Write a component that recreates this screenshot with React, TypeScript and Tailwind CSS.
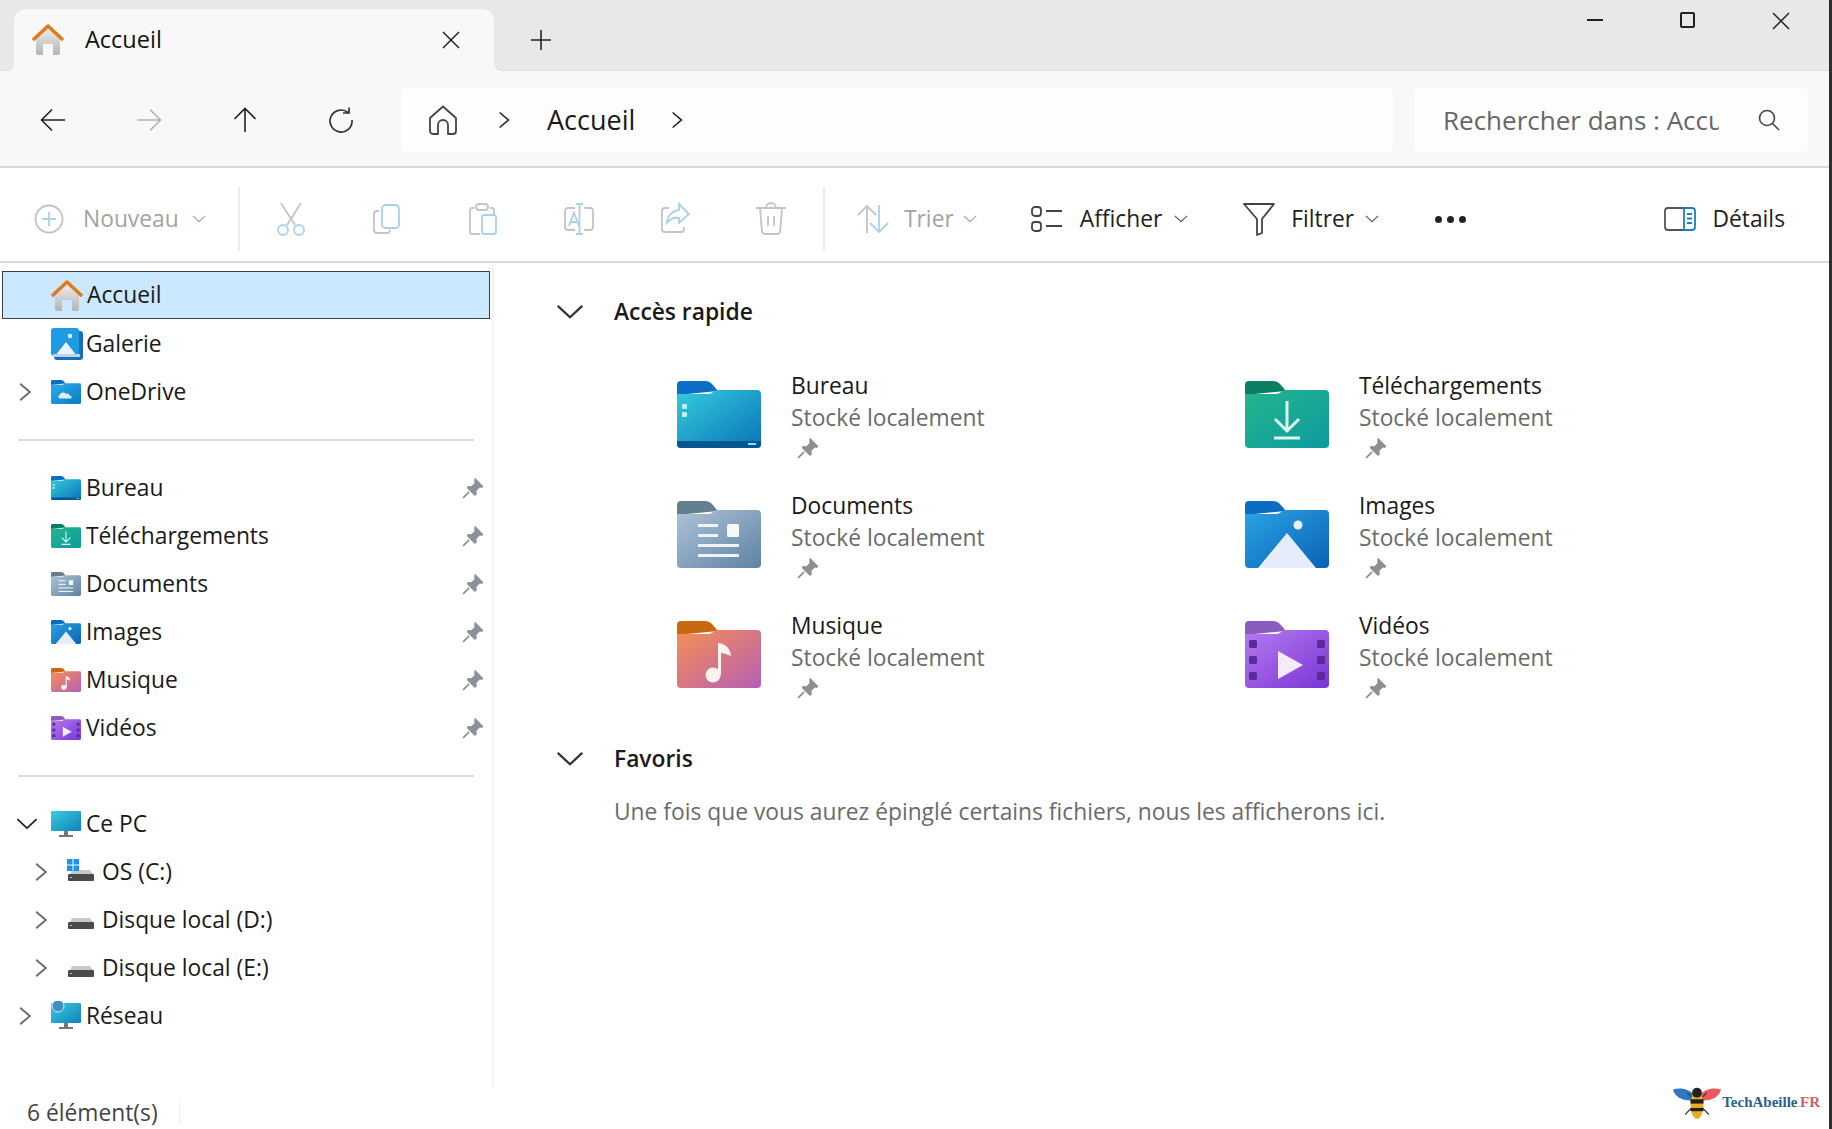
import type { ReactNode } from 'react';

const font = "font-['Open_Sans','Noto_Sans',sans-serif]";

type FolderKind = 'bureau' | 'dl' | 'docs' | 'images' | 'music' | 'videos' | 'cloud';

const palette: Record<FolderKind, { tab: string; from: string; to: string }> = {
  bureau: { tab: '#0a6fc4', from: '#35cbdc', to: '#0a73b8' },
  dl: { tab: '#0b7f62', from: '#23b58c', to: '#0f9aa0' },
  docs: { tab: '#64808f', from: '#aec3d8', to: '#5f82a4' },
  images: { tab: '#0c6cc4', from: '#2aa3e6', to: '#0a62b4' },
  music: { tab: '#c9680f', from: '#f78f54', to: '#b65fb4' },
  videos: { tab: '#8a5cc0', from: '#b57bf0', to: '#7a35d4' },
  cloud: { tab: '#0a6fc4', from: '#2eb0e8', to: '#0a78c8' },
};

// windows 11 style coloured folder, 84x67 viewbox
const Folder = ({ kind, small = false }: { kind: FolderKind; small?: boolean }) => {
  const p = palette[kind];
  const id = small ? `f-${kind}-s` : `f-${kind}`;
  return (
    <svg viewBox="0 0 84 67" className={small ? 'w-[30px] h-6' : 'w-[84px] h-[67px]'}>
      <defs>
        <linearGradient id={id} x1="0" y1="0" x2="1" y2="1">
          <stop offset="0" stopColor={p.from} />
          <stop offset="1" stopColor={p.to} />
        </linearGradient>
      </defs>
      <path d="M0 4a4 4 0 0 1 4-4h24c3 0 5 1 7 3l6 7-41 4z" fill={p.tab} />
      <path d="M0 13h31c2 0 4-1 5-2l3-2h41a4 4 0 0 1 4 4v50a4 4 0 0 1-4 4H4a4 4 0 0 1-4-4z" fill={`url(#${id})`} />
      {kind === 'bureau' && (
        <>
          <path d="M0 60h84v3a4 4 0 0 1-4 4H4a4 4 0 0 1-4-4z" fill="#04578f" />
          <rect x="5" y="23" width="5" height="5" rx="1" fill="#bff0f6" />
          <rect x="5" y="31" width="5" height="5" rx="1" fill="#bff0f6" />
          <rect x="71" y="62" width="8" height="2" fill="#9fd4ec" />
        </>
      )}
      {kind === 'dl' && (
        <path d="M42 20v30M30 38l12 12 12-12M29 57h26" stroke="#d8f8ee" strokeWidth="3" fill="none" />
      )}
      {kind === 'docs' && (
        <>
          <rect x="21" y="23" width="20" height="3" fill="#eef3f8" />
          <rect x="21" y="33" width="20" height="3" fill="#eef3f8" />
          <rect x="21" y="43" width="41" height="3" fill="#eef3f8" />
          <rect x="21" y="53" width="41" height="3" fill="#eef3f8" />
          <rect x="50" y="23" width="12" height="13" rx="1.5" fill="#f6f9fc" />
        </>
      )}
      {kind === 'images' && (
        <>
          <path d="M13 67l29-35 29 35z" fill="#e6edfa" />
          <circle cx="53" cy="24" r="4.5" fill="#e6f2fb" />
        </>
      )}
      {kind === 'music' && (
        <>
          <circle cx="36" cy="54" r="7.5" fill="#fdf3ee" />
          <path d="M41 54V22c3 0 12 2 13 13-4-2-8-3-10-3v22z" fill="#fdf3ee" />
        </>
      )}
      {kind === 'videos' && (
        <>
          <path d="M33 30l25 14-25 14z" fill="#f4ecfd" />
          {[16, 32, 48].map(y => (
            <g key={y} fill="#5a2a9c">
              <rect x="4" y={y + 3} width="8" height="8" rx="1.5" />
              <rect x="72" y={y + 3} width="8" height="8" rx="1.5" />
            </g>
          ))}
        </>
      )}
      {kind === 'cloud' && (
        <path d="M26 52c-6 0-8-9-1-10 1-8 13-9 16-3 5-3 11 0 11 4 7 0 8 9 1 9z" fill="#d8f0fb" />
      )}
    </svg>
  );
};

const Pin = ({ className = '', color = '#8a9199' }: { className?: string; color?: string }) => (
  <svg viewBox="0 0 20 20" className={className}>
    <path d="M11.5 0.5l8 8-1.500 1.500-1.800-.4-3 3 .2 3.200-1.600 1.500-7.600-7.600L5.500 8.200l3 .2 3-3-.4-1.800z" fill={color} />
    <path d="M6.5 13.5L1 19" stroke={color} strokeWidth="1.5" />
  </svg>
);

const Chevron = ({ dir = 'right', className = '' }: { dir?: 'right' | 'down'; className?: string }) => (
  <svg viewBox="0 0 16 16" className={className} fill="none" stroke="currentColor" strokeWidth="1.3">
    <path d={dir === 'right' ? 'M4.5 2L11.5 8l-7 6' : 'M1 4.5L8 11l7-6.5'} />
  </svg>
);

const HomeColor = ({ className = '' }: { className?: string }) => (
  <svg viewBox="0 0 32 32" className={className}>
    <defs>
      <linearGradient id="home-wall" x1="0" y1="0" x2="0" y2="1">
        <stop offset="0" stopColor="#efefef" />
        <stop offset="1" stopColor="#b4b4b4" />
      </linearGradient>
    </defs>
    <path d="M4 14L16 3l12 11v15a2 2 0 0 1-2 2h-5V20h-10v11H6a2 2 0 0 1-2-2z" fill="url(#home-wall)" />
    <path d="M1 16L16 2l15 14" fill="none" stroke="#e07a1c" strokeWidth="3.5" strokeLinejoin="round" />
  </svg>
);

const GalleryIcon = () => (
  <svg viewBox="0 0 32 32" className="w-8 h-8">
    <rect x="3" y="3" width="29" height="29" rx="3" fill="#1a6fb4" />
    <rect x="0" y="0" width="28" height="28" rx="3" fill="#1d9be6" />
    <path d="M4 28l11-14 11 14z" fill="#eef3fb" />
    <circle cx="19" cy="8" r="2.2" fill="#eef6fb" />
    <rect x="2" y="26" width="27" height="3" fill="#bcd4ec" />
  </svg>
);

const Monitor = ({ globe = false }: { globe?: boolean }) => (
  <svg viewBox="0 0 30 30" className="w-[30px] h-[30px]">
    <defs>
      <linearGradient id={globe ? 'mon-g' : 'mon-p'} x1="0" y1="0" x2="1" y2="1">
        <stop offset="0" stopColor="#3ecbe0" />
        <stop offset="1" stopColor="#0c82b8" />
      </linearGradient>
    </defs>
    <rect x="0" y="2" width="30" height="20" rx="1" fill={`url(#${globe ? 'mon-g' : 'mon-p'})`} />
    <rect x="13" y="22" width="4" height="4" fill="#6a7680" />
    <rect x="8" y="26" width="14" height="2" fill="#6a7680" />
    {globe && <circle cx="7" cy="5" r="6" fill="#3f8ec8" stroke="#dbe8f2" strokeWidth="1" />}
  </svg>
);

const Drive = ({ windows = false }: { windows?: boolean }) => (
  <svg viewBox="0 0 28 28" className="w-7 h-7">
    <path d="M3 16l2-4h18l3 4z" fill="#c9c9c9" />
    <rect x="1" y="16" width="26" height="7" rx="1" fill="#4a4a4a" />
    <rect x="3" y="19" width="2" height="1" fill="#bdbdbd" />
    {windows && (
      <g fill="#1b93e6">
        <rect x="0" y="1" width="5.5" height="5.5" />
        <rect x="6.5" y="1" width="5.5" height="5.5" />
        <rect x="0" y="7.5" width="5.5" height="5.5" />
        <rect x="6.5" y="7.5" width="5.5" height="5.5" />
      </g>
    )}
  </svg>
);

const Row = ({ icon, label, indent = 0, arrow, pinned = false }: { icon: ReactNode; label: string; indent?: 0 | 1; arrow?: 'right' | 'down'; pinned?: boolean }) => (
  <div className={`flex items-center h-12 pr-2 ${indent ? 'pl-[35px]' : 'pl-[19px]'}`}>
    <div className="w-[32px] shrink-0 text-[#666]">
      {arrow && <Chevron dir={arrow} className={`w-[22px] h-[22px] ${arrow === 'down' ? '-ml-[3px] text-[#222]' : '-ml-[5px]'}`} />}
    </div>
    <div className="w-[35px] h-8 shrink-0 flex items-center">{icon}</div>
    <span className="text-[#1a1a1a]">{label}</span>
    {pinned && <Pin className="w-[22px] h-[22px] ml-auto" />}
  </div>
);

const Divider = () => <div className="mx-[18px] my-[23px] h-0.5 bg-[#dcdcdc]" />;

const NavButton = ({ children }: { children: ReactNode }) => (
  <div className="w-[96px] flex items-center justify-center shrink-0">{children}</div>
);

// greyed out toolbar glyph, the accent part is blue
const Tool = ({ children }: { children: ReactNode }) => (
  <svg viewBox="0 0 32 36" className="w-8 h-9 mx-8 shrink-0" fill="none" strokeWidth="1.8">{children}</svg>
);

const grey = '#c4c4c4';
const blue = '#a9d2ea';

const QuickItem = ({ kind, name }: { kind: FolderKind; name: string }) => (
  <div className="flex h-[120px] w-[568px] pt-[9px]">
    <div className="w-[114px] pt-[11px] shrink-0"><Folder kind={kind} /></div>
    <div className="flex flex-col">
      <span className="text-[#1a1a1a] leading-8">{name}</span>
      <span className="text-[#6b6b6b] leading-8">Stocké localement</span>
      <Pin className="w-[22px] h-[22px] ml-[6px] mt-[3px]" color="#8e8e8e" />
    </div>
  </div>
);

const SectionHead = ({ title }: { title: string }) => (
  <div className="flex items-center h-10">
    <div className="w-[56px] shrink-0 text-[#333]"><Chevron dir="down" className="w-7 h-7 -ml-0.5" /></div>
    <span className="font-semibold text-[#1a1a1a]">{title}</span>
  </div>
);

export default function App() {
  return (
    <div className={`${font} relative w-[1832px] h-[1129px] bg-white overflow-hidden flex flex-col text-[22.8px]`}>
      {/* tab strip */}
      <div className="flex h-[71px] bg-[#f8f8f8] shrink-0">
        <div className="w-[14px] bg-[#e8e8e8] rounded-br-lg border-b border-[#dedede]" />
        <div className="w-[480px] bg-[#e8e8e8] pt-[9px]">
          <div className="h-full bg-[#f8f8f8] rounded-t-xl flex items-center pl-[18px] pr-[34px]">
            <HomeColor className="w-8 h-8" />
            <span className="ml-[21px] text-[23.5px] text-[#111]">Accueil</span>
            <svg viewBox="0 0 18 18" className="w-[18px] h-[18px] ml-auto" stroke="#222" strokeWidth="1.5"><path d="M1 1l16 16M17 1L1 17" /></svg>
          </div>
        </div>
        <div className="flex flex-1 bg-[#e8e8e8] rounded-bl-lg border-b border-[#dedede]">
          <svg viewBox="0 0 20 20" className="w-5 h-5 ml-[37px] mt-[30px]" stroke="#222" strokeWidth="1.6"><path d="M10 0v20M0 10h20" /></svg>
          <div className="ml-auto flex pr-[42px] pt-3 gap-[77px]">
            <div className="w-4 h-0.5 mt-[7px] bg-[#222]" />
            <div className="w-[15px] h-4 border-2 border-[#222] rounded-[2px]" />
            <svg viewBox="0 0 18 18" className="w-[18px] h-[18px]" stroke="#222" strokeWidth="1.5"><path d="M1 1l16 16M17 1L1 17" /></svg>
          </div>
        </div>
      </div>

      {/* nav bar */}
      <div className="flex items-center h-[97px] bg-[#f8f8f8] border-b-2 border-[#d8d8d8] shrink-0 pt-[3px] pl-[5px]">
        <NavButton>
          <svg viewBox="0 0 26 24" className="w-[26px] h-6" fill="none" stroke="#222" strokeWidth="1.6"><path d="M25 12H2M12 1.5L1.5 12 12 22.5" /></svg>
        </NavButton>
        <NavButton>
          <svg viewBox="0 0 26 24" className="w-[26px] h-6" fill="none" stroke="#b0b0b0" strokeWidth="1.6"><path d="M1 12h23M14 1.5L24.5 12 14 22.5" /></svg>
        </NavButton>
        <NavButton>
          <svg viewBox="0 0 24 26" className="w-6 h-[26px]" fill="none" stroke="#222" strokeWidth="1.6"><path d="M12 25V2M1.5 12L12 1.5 22.5 12" /></svg>
        </NavButton>
        <NavButton>
          <svg viewBox="0 0 26 26" className="w-[26px] h-[26px]" fill="none" stroke="#333" strokeWidth="1.7"><path d="M20 5.5A11 11 0 1 0 24 13M21 .5v5.5h-6" /></svg>
        </NavButton>
        <div className="flex items-center flex-1 h-16 bg-white/80 rounded-md ml-[12px]">
          <svg viewBox="0 0 30 30" className="w-[30px] h-[30px] ml-[27px]" fill="none" stroke="#444" strokeWidth="1.8" strokeLinejoin="round"><path d="M2 13L15 1.5 28 13v13a3 3 0 0 1-3 3h-5v-9a5 5 0 0 0-10 0v9H5a3 3 0 0 1-3-3z" /></svg>
          <Chevron className="w-5 h-5 ml-[36px] text-[#222]" />
          <span className="ml-[33px] text-[27px] text-[#1a1a1a]">Accueil</span>
          <Chevron className="w-5 h-5 ml-[32px] text-[#222]" />
        </div>
        <div className="flex items-center w-[394px] h-16 bg-white/80 rounded-md ml-[21px] mr-[24px] pl-[29px] shrink-0">
          <span className="w-[276px] overflow-hidden whitespace-nowrap text-[26px] text-[#666]">Rechercher dans : Accueil</span>
          <svg viewBox="0 0 24 24" className="w-6 h-6 ml-[38px]" fill="none" stroke="#444" strokeWidth="1.6"><circle cx="10" cy="10" r="7.5" /><path d="M15.5 15.5L22 22" /></svg>
        </div>
      </div>

      {/* command bar */}
      <div className="flex items-center h-[95px] pt-[9px] border-b-2 border-[#d8d8d8] shrink-0">
        <div className="flex items-center w-[238px] pl-[34px] text-[#a3a3a3] shrink-0">
          <svg viewBox="0 0 30 30" className="w-[30px] h-[30px]" fill="none" strokeWidth="1.8">
            <circle cx="15" cy="15" r="13.5" stroke={grey} />
            <path d="M15 8v14M8 15h14" stroke={blue} />
          </svg>
          <span className="ml-[19px]">Nouveau</span>
          <Chevron dir="down" className="w-[14px] h-[14px] ml-[13px]" />
        </div>
        <div className="w-0.5 h-[64px] bg-[#ececec] shrink-0" />
        <div className="flex items-center shrink-0 ml-[3px]">
          <Tool>
            <path d="M6 2l14 22M26 2L12 24" stroke={grey} />
            <circle cx="8" cy="29" r="5" stroke={blue} />
            <circle cx="24" cy="29" r="5" stroke={blue} />
          </Tool>
          <Tool>
            <path d="M8 10H6a3 3 0 0 0-3 3v16a3 3 0 0 0 3 3h10a3 3 0 0 0 3-3" stroke={grey} />
            <rect x="11" y="4" width="17" height="23" rx="3.5" stroke={blue} />
          </Tool>
          <Tool>
            <path d="M7 7H5a2 2 0 0 0-2 2v22a2 2 0 0 0 2 2h8M23 7h2a2 2 0 0 1 2 2v4" stroke={grey} />
            <rect x="9" y="3" width="12" height="6" rx="3" stroke={grey} />
            <rect x="15" y="14" width="14" height="19" rx="2" stroke={blue} />
          </Tool>
          <Tool>
            <path d="M12 7H5a3 3 0 0 0-3 3v16a3 3 0 0 0 3 3h7M21 7h6a3 3 0 0 1 3 3v16a3 3 0 0 1-3 3h-6" stroke={grey} />
            <path d="M6 25l5-13 5 13M8 21h6M16.5 3v30M13 3h7M13 33h7" stroke={blue} />
          </Tool>
          <Tool>
            <path d="M10 7H6a3 3 0 0 0-3 3v18a3 3 0 0 0 3 3h16a3 3 0 0 0 3-3v-2" stroke={grey} />
            <path d="M20 3l10 10-10 9v-5c-5-1-9 1-12 5 0-7 5-12 12-13z" stroke={blue} />
          </Tool>
          <Tool>
            <path d="M1 7h30M5 7l2 24a3 3 0 0 0 3 2h12a3 3 0 0 0 3-2l2-24M11 7a5 5 0 0 1 10 0M13 15v10M19 15v10" stroke={grey} />
          </Tool>
        </div>
        <div className="w-0.5 h-[64px] bg-[#ececec] shrink-0 ml-[4px]" />
        <div className="flex items-center text-[#a3a3a3] ml-[32px] shrink-0">
          <svg viewBox="0 0 32 30" className="w-8 h-[30px]" fill="none" strokeWidth="1.8">
            <path d="M10 29V2M1 11l9-9 9 9" stroke={grey} />
            <path d="M22 1v27M13 19l9 9 9-9" stroke={blue} />
          </svg>
          <span className="ml-[15px]">Trier</span>
          <Chevron dir="down" className="w-[14px] h-[14px] ml-[9px]" />
        </div>
        <div className="flex items-center text-[#222] ml-[54px] shrink-0">
          <svg viewBox="0 0 32 26" className="w-8 h-[26px]" fill="none" stroke="#444" strokeWidth="1.8">
            <rect x="1" y="1" width="9" height="9" rx="3" />
            <rect x="1" y="16" width="9" height="9" rx="3" />
            <path d="M15 5h16M15 20h16" />
          </svg>
          <span className="ml-[17px]">Afficher</span>
          <Chevron dir="down" className="w-[14px] h-[14px] ml-[12px] text-[#555]" />
        </div>
        <div className="flex items-center text-[#222] ml-[54px] shrink-0">
          <svg viewBox="0 0 34 34" className="w-[34px] h-[34px]" fill="none" stroke="#444" strokeWidth="1.8" strokeLinejoin="round"><path d="M2 2h30L20 17v14l-5 2V17z" /></svg>
          <span className="ml-[15px]">Filtrer</span>
          <Chevron dir="down" className="w-[14px] h-[14px] ml-[11px] text-[#555]" />
        </div>
        <div className="flex gap-[5px] ml-[56px] shrink-0">
          <div className="w-[7px] h-[7px] rounded-full bg-[#222]" />
          <div className="w-[7px] h-[7px] rounded-full bg-[#222]" />
          <div className="w-[7px] h-[7px] rounded-full bg-[#222]" />
        </div>
        <div className="flex items-center ml-auto pr-[47px] text-[#222] shrink-0">
          <svg viewBox="0 0 32 24" className="w-8 h-6" fill="none" strokeWidth="1.8">
            <path d="M22 1H4a3 3 0 0 0-3 3v16a3 3 0 0 0 3 3h18" stroke="#555" />
            <path d="M20 1h8a3 3 0 0 1 3 3v16a3 3 0 0 1-3 3h-8z" stroke="#1a80c4" />
            <path d="M23 7h5M23 11.5h5M23 16h5" stroke="#1a80c4" />
          </svg>
          <span className="ml-[16px]">Détails</span>
        </div>
      </div>

      {/* body */}
      <div className="flex flex-1 min-h-0">
        <div className="w-[494px] shrink-0 border-r-2 border-[#f4f4f4] pt-[8px] h-[824px]">
          <div className="flex items-center h-[48px] ml-0.5 mr-0.5 bg-[#cce8ff] border border-[#3a3f45] pl-[48px] pr-2 pt-px">
            <div className="w-[36px] shrink-0"><HomeColor className="w-8 h-8" /></div>
            <span className="text-[#1a1a1a]">Accueil</span>
          </div>
          <div className="pt-px">
            <Row icon={<GalleryIcon />} label="Galerie" />
            <Row icon={<Folder kind="cloud" small />} label="OneDrive" arrow="right" />
            <Divider />
            <Row icon={<Folder kind="bureau" small />} label="Bureau" pinned />
            <Row icon={<Folder kind="dl" small />} label="Téléchargements" pinned />
            <Row icon={<Folder kind="docs" small />} label="Documents" pinned />
            <Row icon={<Folder kind="images" small />} label="Images" pinned />
            <Row icon={<Folder kind="music" small />} label="Musique" pinned />
            <Row icon={<Folder kind="videos" small />} label="Vidéos" pinned />
            <Divider />
            <Row icon={<Monitor />} label="Ce PC" arrow="down" />
            <Row icon={<Drive windows />} label="OS (C:)" indent={1} arrow="right" />
            <Row icon={<Drive />} label="Disque local (D:)" indent={1} arrow="right" />
            <Row icon={<Drive />} label="Disque local (E:)" indent={1} arrow="right" />
            <Row icon={<Monitor globe />} label="Réseau" arrow="right" />
          </div>
        </div>
        <div className="flex-1 pl-[64px] pt-[29px]">
          <SectionHead title="Accès rapide" />
          <div className="flex flex-wrap pl-[119px] pt-[29px] w-[1256px]">
            <QuickItem kind="bureau" name="Bureau" />
            <QuickItem kind="dl" name="Téléchargements" />
            <QuickItem kind="docs" name="Documents" />
            <QuickItem kind="images" name="Images" />
            <QuickItem kind="music" name="Musique" />
            <QuickItem kind="videos" name="Vidéos" />
          </div>
          <div className="mt-[18px]"><SectionHead title="Favoris" /></div>
          <p className="ml-[56px] mt-[16px] text-[#6b6b6b]">Une fois que vous aurez épinglé certains fichiers, nous les afficherons ici.</p>
        </div>
      </div>

      {/* status bar text overlays the sidebar bottom */}
      <div className="absolute left-[27px] bottom-0 h-[32px] flex items-center text-[#444]">
        <span>6 élément(s)</span>
        <div className="w-px h-[22px] bg-[#ececec] ml-[21px]" />
      </div>

      {/* watermark */}
      <div className="absolute right-[12px] bottom-2 flex items-center">
        <svg viewBox="0 0 46 34" className="w-[50px] h-[37px]">
          <path d="M22 12C16 4 8 3 1 5c1 6 8 11 19 10z" fill="#2f78c8" />
          <path d="M24 12c6-8 14-9 21-7-1 6-8 11-19 10z" fill="#ee5a5a" />
          <path d="M14 8l6 6M32 8l-6 6M12 28l8-8M34 28l-8-8" stroke="#444" strokeWidth="1.2" />
          <ellipse cx="23" cy="19" rx="6" ry="13" fill="#e8b020" />
          <rect x="17" y="14" width="12" height="4" fill="#222" />
          <rect x="17" y="22" width="12" height="3" fill="#222" />
          <circle cx="23" cy="8" r="4.5" fill="#222" />
        </svg>
        <span className="font-['Liberation_Serif',serif] font-bold text-[15px] text-[#2b5f8e]">TechAbeille<span className="text-[#b8c8d8] text-[10px]">.</span><span className="text-[#d0605f]">FR</span></span>
      </div>

      {/* dark edge of the screen capture */}
      <div className="absolute right-0 top-0 bottom-0 w-[3px] bg-[#2e2e2e]" />
    </div>
  );
}
